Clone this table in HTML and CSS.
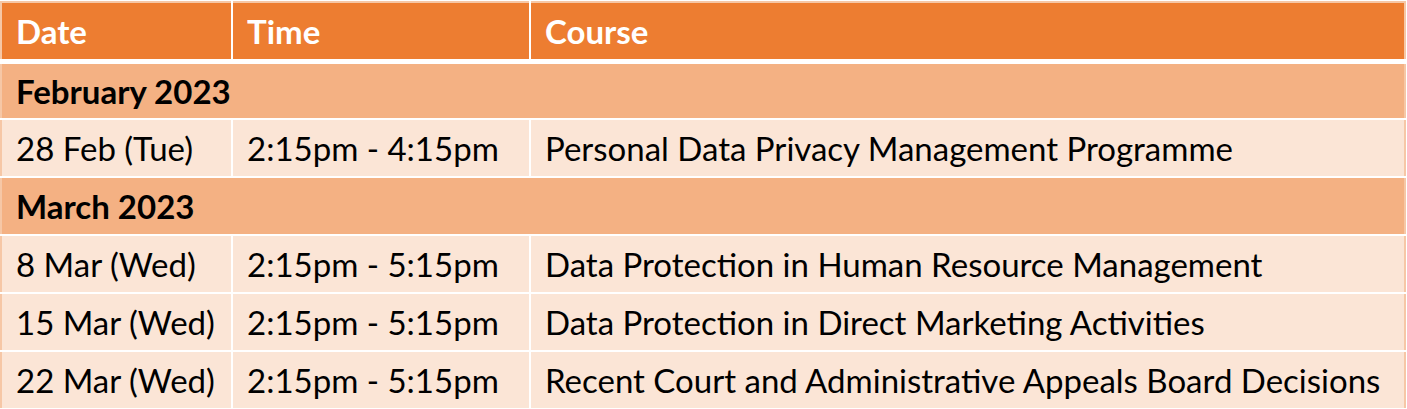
FILE: index.html
```html
<!DOCTYPE html>
<html>
<head>
<meta charset="utf-8">
<link rel="stylesheet" href="styles.css">
</head>
<body>
<table class="schedule">
  <colgroup>
    <col class="c-date">
    <col class="c-time">
    <col class="c-course">
  </colgroup>
  <thead>
    <tr class="head">
      <th>Date</th>
      <th>Time</th>
      <th>Course</th>
    </tr>
  </thead>
  <tbody>
    <tr class="group"><td colspan="3">February 2023</td></tr>
    <tr class="item"><td>28 Feb (Tue)</td><td>2:15pm - 4:15pm</td><td>Personal Data Privacy Management Programme</td></tr>
    <tr class="group"><td colspan="3">March 2023</td></tr>
    <tr class="item"><td>8 Mar (Wed)</td><td>2:15pm - 5:15pm</td><td>Data Protection in Human Resource Management</td></tr>
    <tr class="item"><td>15 Mar (Wed)</td><td>2:15pm - 5:15pm</td><td>Data Protection in Direct Marketing Activities</td></tr>
    <tr class="item"><td>22 Mar (Wed)</td><td>2:15pm - 5:15pm</td><td>Recent Court and Administrative Appeals Board Decisions</td></tr>
  </tbody>
</table>
</body>
</html>
```
FILE: styles.css
```css
html, body {
  margin: 0;
  padding: 0;
  background: #ffffff;
}
body {
  padding: 1px 2px 0 0;
}
.schedule {
  width: 1406px;
  border-collapse: collapse;
  table-layout: fixed;
  font-family: Lato, "Liberation Sans", sans-serif;
  font-size: 33px;
  color: #000;
  border: 1px solid #f6c7a6;
}
.c-date { width: 231px; }
.c-time { width: 298px; }
.c-course { width: auto; }
.schedule th, .schedule td {
  border: 2px solid #ffffff;
  padding: 0 0 0 14px;
  text-align: left;
  white-space: nowrap;
  height: 58px;
  box-sizing: border-box;
}
.schedule th:first-child, .schedule td:first-child { border-left-color: #f6c7a6; }
.schedule th:last-child, .schedule td:last-child { border-right-color: #f6c7a6; }
.head th {
  background: #ed7d31;
  color: #ffffff;
  font-weight: 700;
  border-top-color: #f6c7a6;
  border-bottom-width: 5px;
  height: 59px;
}
.group td {
  background: #f4b183;
  font-weight: 700;
}
.item td {
  background: #fbe5d6;
  font-weight: 400;
}
```
